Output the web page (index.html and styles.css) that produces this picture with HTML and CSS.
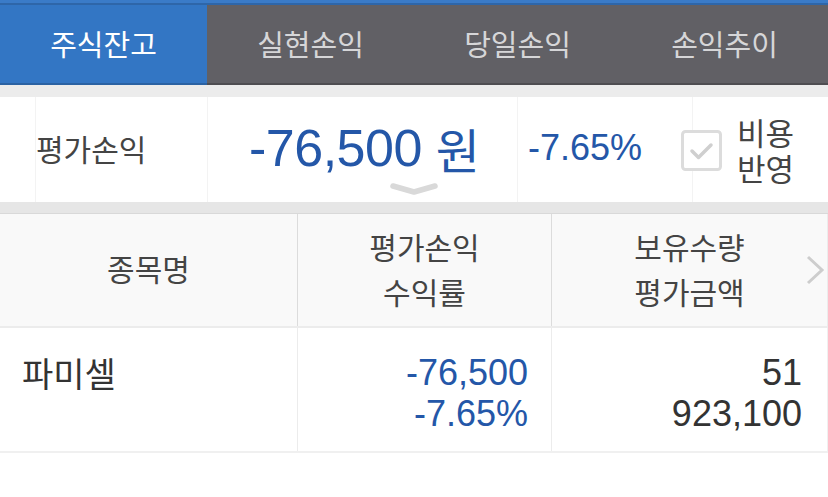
FILE: index.html
```html
<!DOCTYPE html>
<html lang="ko">
<head>
<meta charset="utf-8">
<link rel="stylesheet" href="styles.css">
</head>
<body>
<div class="app">
  <div class="topstrip"></div>
  <nav class="tabs">
    <div class="tab active">주식잔고</div>
    <div class="tab">실현손익</div>
    <div class="tab">당일손익</div>
    <div class="tab">손익추이</div>
  </nav>
  <div class="band"></div>
  <section class="summary">
    <div class="cell gap"></div>
    <div class="cell label">평가손익</div>
    <div class="cell amount">
      <span class="num">-76,500</span> <span class="won">원</span>
      <svg class="fold" width="50" height="14" viewBox="0 0 50 14"><path d="M4 4 L25 10 L46 4" fill="none" stroke="#d9d9d9" stroke-width="5.5" stroke-linecap="round" stroke-linejoin="round"/></svg>
    </div>
    <div class="cell pct">-7.65%</div>
    <div class="cell fee">
      <span class="check">
        <svg width="41" height="41" viewBox="0 0 41 41"><rect x="1.5" y="1.5" width="38" height="38" rx="3" fill="#fff" stroke="#dcdcdc" stroke-width="3"/><path d="M11 21 L17.5 27.5 L30 15" fill="none" stroke="#cfcfcf" stroke-width="3.5" stroke-linecap="round" stroke-linejoin="round"/></svg>
      </span>
      <span class="fee-text"><span class="line">비용</span><span class="line">반영</span></span>
    </div>
  </section>
  <div class="sep"></div>
  <section class="table">
    <div class="row head">
      <div class="col c1">종목명</div>
      <div class="col c2">평가손익<br>수익률</div>
      <div class="col c3">보유수량<br>평가금액
        <svg class="more" width="20" height="30" viewBox="0 0 20 30"><path d="M3 2 L17 15 L3 28" fill="none" stroke="#cdcdcd" stroke-width="3"/></svg>
      </div>
    </div>
    <div class="row data">
      <div class="col c1 name">파미셀</div>
      <div class="col c2 val blue">-76,500<br>-7.65%</div>
      <div class="col c3 val">51<br>923,100</div>
    </div>
  </section>
</div>
</body>
</html>
```

FILE: styles.css
```css
* { box-sizing: border-box; }
html, body { margin: 0; padding: 0; background: #fff; }
body {
  width: 828px;
  font-family: "Noto Sans CJK KR", "Noto Sans", sans-serif;
  color: #333;
}
.topstrip {
  height: 5px;
  background: #3a7bc8;
  border-bottom: 2px solid #2e66a9;
}
.tabs {
  display: grid;
  grid-template-columns: repeat(4, 1fr);
  height: 80px;
  background: #616065;
}
.tab {
  display: flex;
  align-items: center;
  justify-content: center;
  font-size: 29px;
  color: #d6d6d8;
  border-bottom: 2px solid #4e4d51;
  padding-bottom: 2px;
}
.tab.active {
  background: #3376c4;
  color: #fff;
  border-bottom-color: #2b62a3;
}
.band {
  height: 12px;
  background: #ececec;
}
.summary {
  display: flex;
  height: 105px;
  align-items: stretch;
}
.cell {
  display: flex;
  align-items: center;
  border-left: 1px solid #f3f3f3;
}
.cell.gap { width: 35px; border-left: none; }
.cell.label {
  width: 172px;
  font-size: 30px;
  color: #444;
  padding-bottom: 4px;
}
.cell.amount {
  width: 310px;
  justify-content: center;
  position: relative;
  color: #2457a8;
  gap: 14px;
  padding-left: 4px;
  padding-bottom: 4px;
}
.num {
  font-family: "Liberation Sans", Arial, sans-serif;
  font-size: 52px;
  letter-spacing: -0.5px;
}
.won {
  font-size: 48px;
}
.fold {
  position: absolute;
  left: 181px;
  top: 85px;
}
.cell.pct {
  width: 175px;
  padding-left: 10px;
  font-family: "Liberation Sans", Arial, sans-serif;
  font-size: 36px;
  color: #2457a8;
  padding-bottom: 4px;
}
.cell.fee {
  flex: 1;
  position: relative;
}
.check {
  display: flex;
  margin-left: -12px;
  margin-top: 2px;
}
.fee-text {
  display: flex;
  flex-direction: column;
  gap: 2px;
  margin-left: 15px;
  font-size: 31px;
  color: #444;
}
.fee-text .line {
  line-height: 34px;
  height: 34px;
}
.sep {
  height: 12px;
  background: #e6e6e6;
  border-bottom: 1px solid #d9d9d9;
}
.row {
  display: grid;
  grid-template-columns: 297px 254px 277px;
}
.row.head {
  height: 114px;
  background: #f9f9f9;
  border-bottom: 2px solid #ececec;
}
.row.head .col {
  display: flex;
  align-items: center;
  justify-content: center;
  text-align: center;
  font-size: 30px;
  line-height: 45px;
  color: #444;
}
.row.head .c1 { padding-bottom: 3px; }
.row.head .c2, .row.head .c3 { border-left: 1px solid #dcdcdc; padding-bottom: 2px; }
.row.head .c3 { position: relative; border-right: 1px solid #ececec; }
.more {
  position: absolute;
  right: 2px;
  top: 41px;
}
.row.data {
  height: 125px;
  border-bottom: 2px solid #f0f0f0;
}
.row.data .col {
  padding-top: 24px;
  line-height: 41px;
}
.row.data .c2, .row.data .c3 { border-left: 1px solid #ececec; }
.row.data .c3 { border-right: 1px solid #f0f0f0; }
.name {
  padding-left: 22px;
  font-size: 34px;
  color: #333;
}
.val {
  text-align: right;
  font-family: "Liberation Sans", Arial, sans-serif;
  font-size: 36px;
  color: #333;
}
.row.data .c2 { padding-right: 23px; }
.row.data .c3 { padding-right: 25px; }
.blue { color: #2457a8; }
```
